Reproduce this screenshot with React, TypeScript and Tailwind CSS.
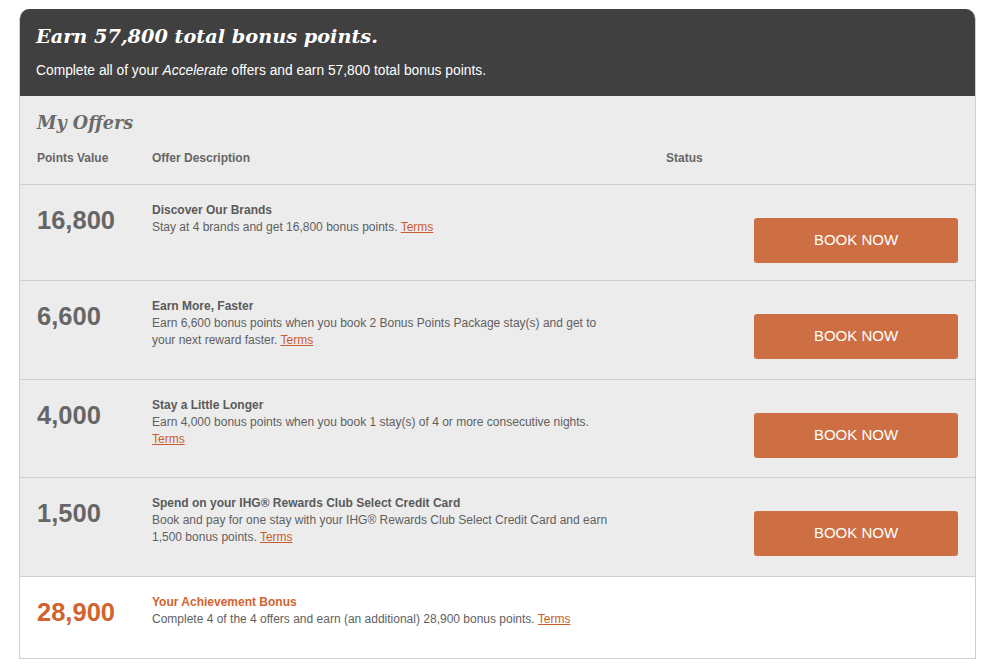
import React from "react";

type Offer = {
  points: string;
  title: string;
  desc: string;
  h: string;
};

const offers: Offer[] = [
  {
    points: "16,800",
    title: "Discover Our Brands",
    desc: "Stay at 4 brands and get 16,800 bonus points.",
    h: "h-[96px]",
  },
  {
    points: "6,600",
    title: "Earn More, Faster",
    desc: "Earn 6,600 bonus points when you book 2 Bonus Points Package stay(s) and get to your next reward faster.",
    h: "h-[99px]",
  },
  {
    points: "4,000",
    title: "Stay a Little Longer",
    desc: "Earn 4,000 bonus points when you book 1 stay(s) of 4 or more consecutive nights.",
    h: "h-[98px]",
  },
  {
    points: "1,500",
    title: "Spend on your IHG® Rewards Club Select Credit Card",
    desc: "Book and pay for one stay with your IHG® Rewards Club Select Credit Card and earn 1,500 bonus points.",
    h: "h-[99px]",
  },
];

function Terms() {
  return (
    <a href="#" className="text-[#c95d2c] underline underline-offset-1">
      Terms
    </a>
  );
}

function OfferRow({ offer }: { offer: Offer }) {
  return (
    <div className={`flex border-t border-[#cfcfcf] bg-[#ececec] pl-[17px] pr-[17px] ${offer.h}`}>
      <div className="w-[115px] pt-[20px] text-[25.5px] font-bold leading-[30px] text-[#666666]">
        {offer.points}
      </div>
      <div className="w-[470px] pt-[17px] text-[12px] leading-[17px] text-[#5f5f5f]">
        <div className="font-bold text-[#5a5a5a]">{offer.title}</div>
        <div>
          {offer.desc} <Terms />
        </div>
      </div>
      <div className="flex flex-1 justify-end pt-[33px]">
        <button className="h-[45px] w-[204px] rounded-[3px] bg-[#cd6f42] text-[15px] text-white">
          BOOK NOW
        </button>
      </div>
    </div>
  );
}

export default function App() {
  return (
    <div className="min-h-[668px] bg-white pt-[9px] font-['Liberation_Sans',Arial,sans-serif]">
      <div className="mx-[19px] w-[957px] overflow-hidden rounded-t-[10px] border-x border-b border-[#cfcfcf]">
        {/* Header */}
        <div className="bg-[#404040] px-[16px] pt-[13px] pb-[15px] text-white">
          <h1 className="font-['DejaVu_Serif',Georgia,serif] text-[19.3px] font-bold italic leading-[30px]">
            Earn 57,800 total bonus points.
          </h1>
          <p className="mt-[9px] text-[13.8px] leading-[20px]">
            Complete all of your <em>Accelerate</em> offers and earn 57,800 total bonus points.
          </p>
        </div>

        {/* My Offers */}
        <div className="bg-[#ececec] pl-[17px] pt-[14px] pb-[18px] text-[#666666]">
          <h2 className="font-['DejaVu_Serif',Georgia,serif] text-[17.6px] font-bold italic leading-[26px] text-[#6b6b6b]">
            My Offers
          </h2>
          <div className="mt-[14px] flex text-[12px] font-bold leading-[16px]">
            <div className="w-[115px]">Points Value</div>
            <div className="w-[514px]">Offer Description</div>
            <div>Status</div>
          </div>
        </div>

        {offers.map((o) => (
          <OfferRow key={o.points} offer={o} />
        ))}

        {/* Achievement */}
        <div className="flex h-[82px] border-t border-[#cfcfcf] bg-white pl-[17px]">
          <div className="w-[115px] pt-[20px] text-[25.5px] font-bold leading-[30px] text-[#cf642f]">
            28,900
          </div>
          <div className="w-[470px] pt-[17px] text-[12px] leading-[17px] text-[#5f5f5f]">
            <div className="font-bold text-[#cf642f]">Your Achievement Bonus</div>
            <div>
              Complete 4 of the 4 offers and earn (an additional) 28,900 bonus points. <Terms />
            </div>
          </div>
        </div>
      </div>
    </div>
  );
}
